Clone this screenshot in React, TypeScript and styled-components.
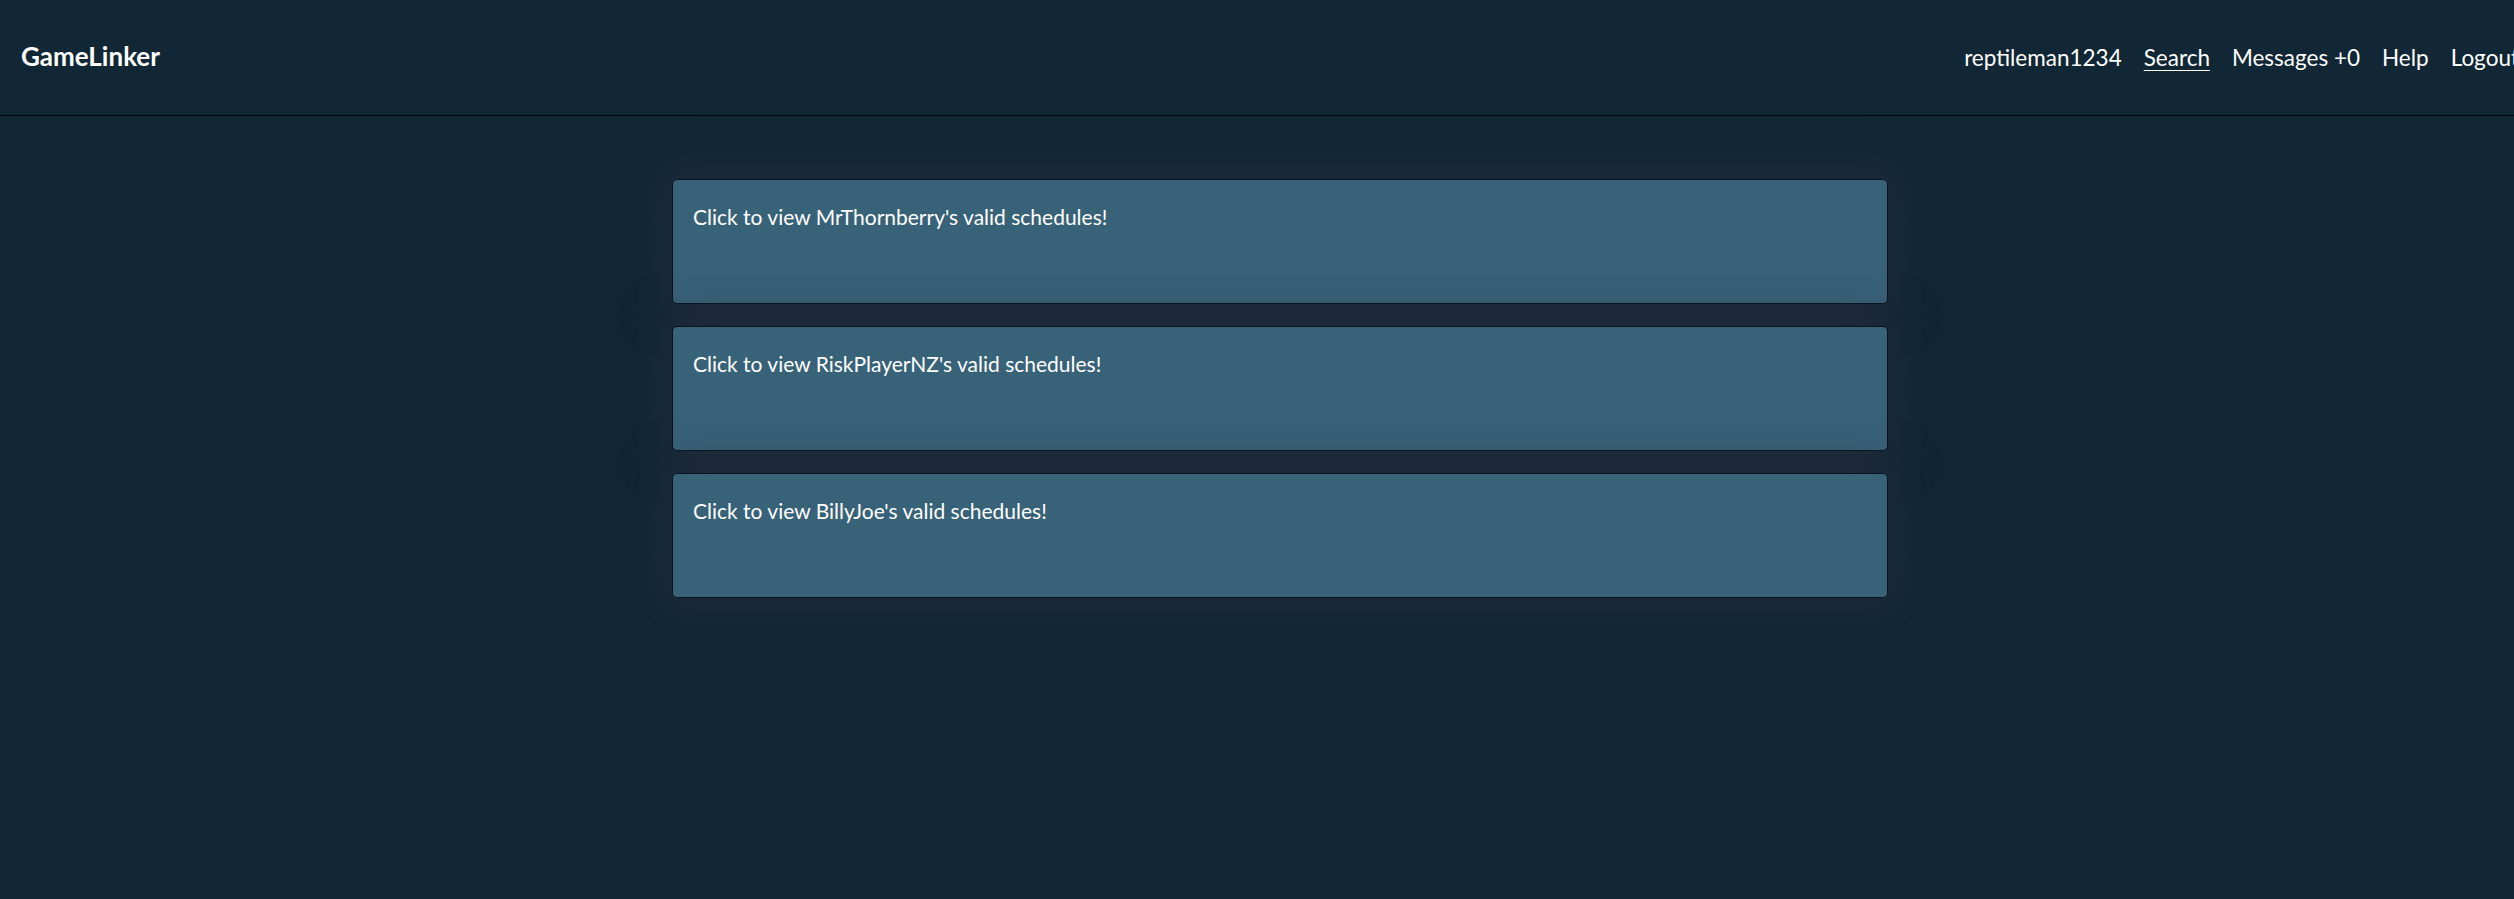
import React from "react";
import styled, { createGlobalStyle } from "styled-components";

const GlobalStyle = createGlobalStyle`
  html, body {
    margin: 0;
    padding: 0;
    background: #112735;
    overflow: hidden;
  }
  body {
    font-family: Lato, "Open Sans", sans-serif;
    color: #ffffff;
  }
`;

const Page = styled.div`
  width: 2560px;
  min-height: 100vh;
  background: #112735;
`;

const Header = styled.header`
  box-sizing: border-box;
  height: 116px;
  display: flex;
  align-items: center;
  justify-content: space-between;
  padding: 0 41px 0 21px;
  border-bottom: 1px solid #02080c;
`;

const Brand = styled.a`
  font-family: Lato, sans-serif;
  font-weight: 700;
  font-size: 26px;
  line-height: 31px;
  color: #ffffff;
  text-decoration: none;
  margin-top: -2px;
`;

const Nav = styled.nav`
  display: flex;
  align-items: center;
  gap: 22px;
  margin-top: 0;
`;

const NavItem = styled.a<{ $active?: boolean }>`
  font-family: Lato, sans-serif;
  font-size: 22.5px;
  line-height: 27px;
  color: #ffffff;
  white-space: nowrap;
  text-decoration: ${(p) => (p.$active ? "underline" : "none")};
  text-decoration-thickness: 1px;
  text-underline-offset: 4px;
`;

const List = styled.main`
  width: 1216px;
  margin: 63px auto 0;
  display: flex;
  flex-direction: column;
  gap: 22px;
`;

const Card = styled.div`
  box-sizing: border-box;
  height: 125px;
  padding: 21px 20px;
  background: #386278;
  border: 1px solid #08131b;
  border-radius: 5px;
  box-shadow: 0 0 45px 6px rgba(48, 48, 70, 0.55);
  font-family: Lato, sans-serif;
  font-size: 21px;
  line-height: 31.5px;
  color: #ffffff;
  cursor: pointer;
`;

const players = ["MrThornberry", "RiskPlayerNZ", "BillyJoe"];

export default function App() {
  return (
    <Page>
      <GlobalStyle />
      <Header>
        <Brand>GameLinker</Brand>
        <Nav>
          <NavItem>reptileman1234</NavItem>
          <NavItem $active>Search</NavItem>
          <NavItem>Messages +0</NavItem>
          <NavItem>Help</NavItem>
          <NavItem>Logout</NavItem>
        </Nav>
      </Header>
      <List>
        {players.map((p) => (
          <Card key={p}>Click to view {p}'s valid schedules!</Card>
        ))}
      </List>
    </Page>
  );
}
